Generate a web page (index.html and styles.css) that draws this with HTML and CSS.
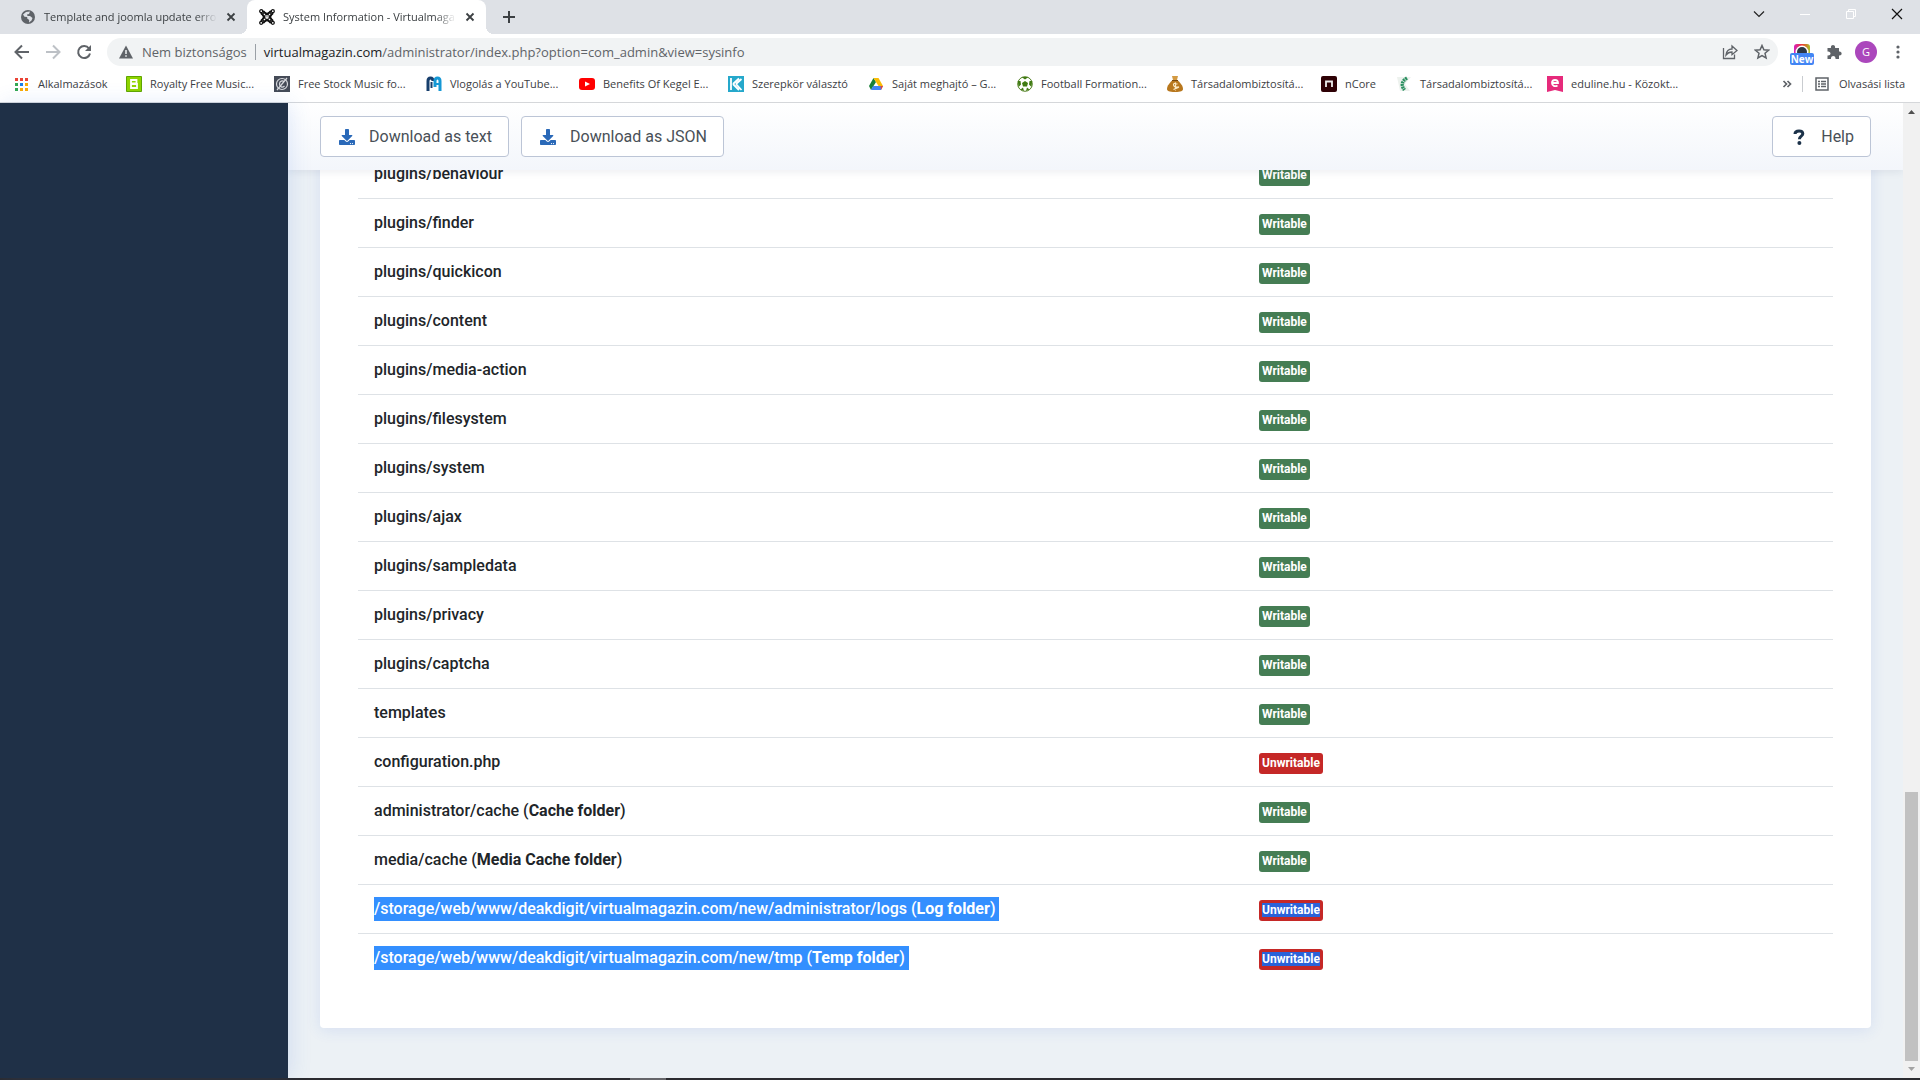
FILE: index.html
```html
<!DOCTYPE html>
<html lang="hu">
<head>
    <meta charset="UTF-8">
    <meta name="viewport" content="width=device-width, initial-scale=1.0">
    <title>System Information - Virtualmagazin</title>
    <link rel="stylesheet" href="styles.css">
</head>
<body>
    <svg width="0" height="0" class="defs">
        <symbol id="close" viewBox="0 0 12 12"><path d="M2.5 2.5l7 7M9.5 2.5l-7 7" stroke="#3c4043" stroke-width="1.8"/></symbol>
        <symbol id="download" viewBox="0 0 512 512"><path fill="#2a69b8" d="M216 0h80c13.300 0 24 10.700 24 24v168h87.700c17.800 0 26.700 21.500 14.100 34.100L269.700 378.300c-7.500 7.500-19.800 7.500-27.300 0L90.100 226.100c-12.600-12.600-3.700-34.100 14.100-34.100H192V24c0-13.300 10.700-24 24-24zm296 376v112c0 13.300-10.700 24-24 24H24c-13.300 0-24-10.700-24-24V376c0-13.300 10.700-24 24-24h146.700l49 49c20.100 20.100 52.500 20.100 72.600 0l49-49H488c13.300 0 24 10.700 24 24zm-124 88c0-11-9-20-20-20s-20 9-20 20 9 20 20 20 20-9 20-20zm64 0c0-11-9-20-20-20s-20 9-20 20 9 20 20 20 20-9 20-20z"/></symbol>
    </svg>

    <header class="browser">
        <div class="tabs">
            <div class="tab">
                <svg class="icon" viewBox="0 0 16 16"><circle cx="8" cy="8" r="7" fill="#5f6368"/><path d="M3 5.500L6 3l4-.5-1 2.500-2 .5.500 1.500H10l2.500 2-1 2.500-2.500 2 .2-2.500-2-1.500V8L4.500 7.800z" fill="#dee1e6"/></svg>
                <span class="tab-title">Template and joomla update erro</span>
                <button class="tab-close" aria-label="Bezárás"><svg width="12" height="12"><use href="#close"/></svg></button>
            </div>
            <div class="tab active">
                <svg class="icon" viewBox="0 0 16 16" fill="none" stroke="#111"><path d="M3 3l10 10M13 3L3 13" stroke-width="5"/><path d="M3 3l10 10M13 3L3 13" stroke="#fff" stroke-width="1.600" stroke-dasharray="1.500 1"/><path d="M4 2.500q4 4 8 0M4 13.500q4-4 8 0M2.500 4q4 4 0 8M13.500 4q-4 4 0 8" stroke-width="1.400"/><g fill="#fff" stroke-width="1.300"><circle cx="2.200" cy="2.200" r="1.500"/><circle cx="13.800" cy="2.200" r="1.500"/><circle cx="2.200" cy="13.800" r="1.500"/><circle cx="13.800" cy="13.800" r="1.500"/></g></svg>
                <span class="tab-title">System Information - Virtualmaga</span>
                <button class="tab-close" aria-label="Bezárás"><svg width="12" height="12"><use href="#close"/></svg></button>
            </div>
            <button class="new-tab" aria-label="Új lap"><svg width="12" height="12"><path d="M6 0v12M0 6h12" stroke="#3c4043" stroke-width="2"/></svg></button>
            <div class="window-controls">
                <button aria-label="Lapok keresése"><svg width="12" height="12"><path d="M1 3.500l5 5 5-5" fill="none" stroke="#222" stroke-width="1.200"/></svg></button>
                <button aria-label="Kis méret"><svg width="12" height="12"><path d="M1 6.500h10" stroke="#fff"/></svg></button>
                <button aria-label="Előző méret"><svg width="12" height="12"><path d="M1.500 3.500h7v7h-7zM3.500 3.500v-2h7v7h-2" fill="none" stroke="#fff"/></svg></button>
                <button aria-label="Ablak bezárása"><svg width="12" height="12"><path d="M1 1l10 10M11 1L1 11" stroke="#111" stroke-width="1.200"/></svg></button>
            </div>
        </div>

        <div class="navbar">
            <button aria-label="Vissza"><svg width="16" height="16" fill="none" stroke="#5f6368" stroke-width="2"><path d="M15 8H2M8 1.500L1.500 8 8 14.500"/></svg></button>
            <button aria-label="Előre"><svg width="16" height="16" fill="none" stroke="#bdc1c6" stroke-width="2"><path d="M1 8h13M8 1.500L14.500 8 8 14.500"/></svg></button>
            <button aria-label="Újratöltés"><svg width="16" height="16"><path d="M13 4.500A6 6 0 1 0 14 9.500" fill="none" stroke="#5f6368" stroke-width="2"/><path d="M15 1v6H9z" fill="#5f6368"/></svg></button>
            <div class="address">
                <svg width="16" height="16"><path d="M8 1.500L15 14.500H1z" fill="#5f6368"/><path d="M8 6v4M8 11.200v1.600" stroke="#f1f3f4" stroke-width="1.500"/></svg>
                <span class="security">Nem biztonságos</span>
                <span class="url"><b>virtualmagazin.com</b>/administrator/index.php?option=com_admin&amp;view=sysinfo</span>
                <button aria-label="Megosztás"><svg width="16" height="16" fill="none" stroke="#5f6368" stroke-width="1.300"><path d="M1.500 4v10.500h11v-4M4 11c.5-4 3-6 6-6V2l5 4.500-5 4.200V8c-3 0-4.500 1-6 3z"/></svg></button>
                <button aria-label="Könyvjelző"><svg width="16" height="16"><path d="M8 1.500l1.900 4.300 4.700.4-3.600 3.100 1.100 4.600L8 11.500l-4.100 2.400L5 9.300 1.400 6.200l4.700-.4z" fill="none" stroke="#5f6368" stroke-width="1.500"/></svg></button>
            </div>
            <div class="extensions">
                <button class="ext-new" aria-label="Bővítmény">
                    <svg width="18" height="18"><defs><linearGradient id="g"><stop stop-color="#d41fc0"/><stop offset=".5" stop-color="#f03a2e"/><stop offset="1" stop-color="#a7c32a"/></linearGradient></defs><rect x="1" y="1" width="16" height="16" rx="3" fill="url(#g)"/><circle cx="9" cy="9" r="6.500" fill="#fff"/><circle cx="9" cy="9" r="5" fill="#2d3846"/></svg>
                    <span class="badge-new">New</span>
                </button>
                <button aria-label="Bővítmények"><svg width="16" height="16"><path d="M1.500 4H5C4 0 10 0 9 4h4v3.500c3.500-.5 3.500 4.500 0 4V15H9.500c.5-4-5-4-4.500 0H1.500v-3.500c4 .5 4-4.500 0-4z" fill="#5f6368"/></svg></button>
                <button class="avatar">G</button>
                <button aria-label="Menü"><svg width="16" height="16" fill="#5f6368"><circle cx="8" cy="3" r="1.600"/><circle cx="8" cy="8" r="1.600"/><circle cx="8" cy="13" r="1.600"/></svg></button>
            </div>
        </div>

        <nav class="bookmarks">
            <a href="#"><svg class="icon" viewBox="0 0 16 16"><path d="M1 2h3v3H1zM6 2h3v3H6zM11 2h3v3h-3z" fill="#ea4335"/><path d="M1 7h3v3H1zM1 12h3v3H1z" fill="#34a853"/><path d="M6 7h3v3H6z" fill="#1a80e8"/><path d="M11 7h3v3h-3zM6 12h3v3H6zM11 12h3v3h-3z" fill="#fbab04"/></svg>Alkalmazások</a>
            <a href="#"><svg class="icon" viewBox="0 0 16 16"><path d="M.5.5h15v15H.5z" fill="#8fd400" stroke="#5fa500"/><path d="M5 4h5.500v3.500H5zM5 8h6v4H5z" fill="none" stroke="#fff" stroke-width="1.800"/></svg>Royalty Free Music...</a>
            <a href="#"><svg class="icon" viewBox="0 0 16 16"><path d="M0 0h16v16H0z" fill="#454b57"/><g fill="none" stroke="#d8dade" stroke-width="1.200"><circle cx="8" cy="8" r="5.500"/><path d="M10.500 6c-2-2-5-1-5 2s3 4 5 2M3 14L13 2"/></g></svg>Free Stock Music fo...</a>
            <a href="#"><svg class="icon" viewBox="0 0 16 16" fill="none" stroke-width="3"><path d="M2 15V5q0-3 2.500-3T7 5" stroke="#173e6c"/><path d="M5.500 12V6" stroke="#173e6c" stroke-width="2"/><path d="M9 11V5q0-3 2.500-3T14 5v10" stroke="#1598d5"/><path d="M10 8h4" stroke="#1598d5" stroke-width="2"/></svg>Vlogolás a YouTube...</a>
            <a href="#"><svg class="icon" viewBox="0 0 16 16"><rect y="2" width="16" height="12" rx="3" fill="#f00"/><path d="M6 5.500L11 8l-5 2.500z" fill="#fff"/></svg>Benefits Of Kegel E...</a>
            <a href="#"><svg class="icon" viewBox="0 0 16 16"><path d="M0 0h16v16H0z" fill="#25a8cb"/><path d="M3 2v12M5 8l6-5.500M5 8l6 6M8 8l5.500-5M8 8l5.500 6" stroke="#fff" stroke-width="1.800"/></svg>Szerepkör választó</a>
            <a href="#"><svg class="icon" viewBox="0 0 16 16"><path d="M5.500 2L1 10l2 4 5-8z" fill="#188038"/><path d="M5.500 2h5L15 10h-4.500z" fill="#fbbc04"/><path d="M5 10h10l-2 4H3z" fill="#4285f4"/><path d="M12.500 10H15l-2 4z" fill="#ea4335"/></svg>Saját meghajtó – G...</a>
            <a href="#"><svg class="icon" viewBox="0 0 16 16"><circle cx="8" cy="8" r="7.300" fill="#fff" stroke="#548224"/><path d="M8 5l3 2-1 3.500H6L5 7zM4.500 1h7L8 3.500zM.8 5L3.500 5l.5 3.500L1.500 11zM15.200 5L12.500 5 12 8.500l2.500 2.500zM3.500 13.500l2.500-2 1 3.500zM12.500 13.500l-2.500-2L9 15z" fill="#407b13"/></svg>Football Formation...</a>
            <a href="#"><svg class="icon" viewBox="0 0 16 16"><path d="M5 0h6l-1 4H6z" fill="#d39a42"/><path d="M6 4h4c3 2 6 6 6 9 0 2-2 3-8 3s-8-1-8-3c0-3 3-7 6-9z" fill="#b8771d"/><path d="M5 4.500h6" stroke="#77470d"/><path d="M10.500 8Q6 6.500 6.500 9t4 2-4 2.500M8.500 6.500v8" fill="none" stroke="#fbe9c5" stroke-width="1.200"/></svg>Társadalombiztosítá...</a>
            <a href="#"><svg class="icon" viewBox="0 0 16 16"><rect width="16" height="16" rx="2" fill="#2e0105"/><path d="M5 11V5.500h6V11" fill="none" stroke="#eee" stroke-width="1.800"/></svg>nCore</a>
            <a href="#"><svg class="icon" viewBox="0 0 16 16"><path d="M1 1h14L9 8l5 7H4z" fill="#edf2ee"/><path d="M11 2Q3 7 8.500 14" fill="none" stroke="#2b8f60" stroke-width="3.500" stroke-dasharray="2 .6"/></svg>Társadalombiztosítá...</a>
            <a href="#"><svg class="icon" viewBox="0 0 16 16"><path d="M0 0h16v16l-8-2-8 2z" fill="#e62a7b"/><path d="M5 7h6c0-4-6-4-6 0 0 3 3 4 5.500 2.500" fill="none" stroke="#fff" stroke-width="1.800"/></svg>eduline.hu - Közokt...</a>
            <div class="bookmarks-end">
                <button aria-label="További könyvjelzők"><svg width="10" height="10"><path d="M1.500 2l3 3-3 3M5.500 2l3 3-3 3" fill="none" stroke="#5f6368" stroke-width="1.700"/></svg></button>
                <a href="#" class="reading"><svg class="icon" viewBox="0 0 16 16"><path d="M2 2h12v12H2z" fill="none" stroke="#5f6368" stroke-width="1.500"/><path d="M4 5.500h2M7 5.500h5M4 8h2M7 8h5M4 10.500h2M7 10.500h5" stroke="#5f6368" stroke-width="1.400"/></svg>Olvasási lista</a>
            </div>
        </nav>
    </header>

    <div class="page">
        <aside class="sidebar"></aside>
        <main class="content">
            <div class="toolbar">
                <button class="btn"><svg width="16" height="16"><use href="#download"/></svg>Download as text</button>
                <button class="btn"><svg width="16" height="16"><use href="#download"/></svg>Download as JSON</button>
                <button class="btn btn-help"><svg width="16" height="16"><path d="M4 5q0-3 4-3 3.800 0 3.800 2.800C11.800 7.300 8.400 7 8.400 10.200" fill="none" stroke="#1c3249" stroke-width="3"/><circle cx="8.400" cy="14" r="2" fill="#1c3249"/></svg>Help</button>
            </div>
            <div class="card">
                <table>
                    <tbody>
                        <tr><th scope="row">plugins/behaviour</th><td><span class="badge">Writable</span></td></tr>
                        <tr><th scope="row">plugins/finder</th><td><span class="badge">Writable</span></td></tr>
                        <tr><th scope="row">plugins/quickicon</th><td><span class="badge">Writable</span></td></tr>
                        <tr><th scope="row">plugins/content</th><td><span class="badge">Writable</span></td></tr>
                        <tr><th scope="row">plugins/media-action</th><td><span class="badge">Writable</span></td></tr>
                        <tr><th scope="row">plugins/filesystem</th><td><span class="badge">Writable</span></td></tr>
                        <tr><th scope="row">plugins/system</th><td><span class="badge">Writable</span></td></tr>
                        <tr><th scope="row">plugins/ajax</th><td><span class="badge">Writable</span></td></tr>
                        <tr><th scope="row">plugins/sampledata</th><td><span class="badge">Writable</span></td></tr>
                        <tr><th scope="row">plugins/privacy</th><td><span class="badge">Writable</span></td></tr>
                        <tr><th scope="row">plugins/captcha</th><td><span class="badge">Writable</span></td></tr>
                        <tr><th scope="row">templates</th><td><span class="badge">Writable</span></td></tr>
                        <tr><th scope="row">configuration.php</th><td><span class="badge danger">Unwritable</span></td></tr>
                        <tr><th scope="row">administrator/cache (<strong>Cache folder</strong>)</th><td><span class="badge">Writable</span></td></tr>
                        <tr><th scope="row">media/cache (<strong>Media Cache folder</strong>)</th><td><span class="badge">Writable</span></td></tr>
                        <tr><th scope="row"><span class="selected">/storage/web/www/deakdigit/virtualmagazin.com/new/administrator/logs (<strong>Log folder</strong>) </span></th><td><span class="badge danger"><span class="selected">Unwritable</span></span></td></tr>
                        <tr><th scope="row"><span class="selected">/storage/web/www/deakdigit/virtualmagazin.com/new/tmp (<strong>Temp folder</strong>) </span></th><td><span class="badge danger"><span class="selected">Unwritable</span></span></td></tr>
                    </tbody>
                </table>
            </div>
        </main>
        <div class="scrollbar">
            <svg width="17" height="17"><path d="M5 11l3.500-4 3.500 4z" fill="#505050"/></svg>
            <div class="thumb"></div>
            <svg width="17" height="17"><path d="M5 6l3.500 4L12 6z" fill="#a3a3a3"/></svg>
        </div>
    </div>
    <div class="taskbar"></div>
</body>
</html>
```
FILE: styles.css
```css
* {
    box-sizing: border-box;
}
body {
    margin: 0;
    height: 100vh;
    display: flex;
    flex-direction: column;
    overflow: hidden;
    font-family: Roboto, sans-serif;
    font-size: 16px;
    line-height: 24px;
    color: #212529;
}
button {
    font: inherit;
    color: inherit;
    background: none;
    border: none;
    padding: 0;
}
svg {
    display: block;
    flex: none;
}
.defs {
    position: absolute;
}
.icon {
    width: 16px;
    height: 16px;
}

/* browser */
.browser {
    font-family: "Open Sans", sans-serif;
    font-size: 11px;
    line-height: 16px;
    color: #3c4043;
    border-bottom: 1px solid #d5d7da;
}
.tabs {
    display: flex;
    height: 34px;
    padding-left: 8px;
    background: #dee1e6;
}
.tab {
    display: flex;
    align-items: center;
    gap: 8px;
    width: 239px;
    padding: 0 10px 0 12px;
}
.tab.active {
    position: relative;
    background: #fff;
    border-radius: 8px 8px 0 0;
}
.tab.active::before,
.tab.active::after {
    content: "";
    position: absolute;
    bottom: 0;
    width: 8px;
    height: 8px;
}
.tab.active::before {
    left: -8px;
    background: radial-gradient(circle at 0 0, #dee1e6 8px, #fff 8px);
}
.tab.active::after {
    right: -8px;
    background: radial-gradient(circle at 100% 0, #dee1e6 8px, #fff 8px);
}
.tab-title {
    flex: 1;
    white-space: nowrap;
    -webkit-mask-image: linear-gradient(to right, #000 88%, transparent);
}
.new-tab {
    margin-left: 17px;
}
.window-controls {
    display: flex;
    gap: 34px;
    margin-left: auto;
    padding: 0 17px 6px 0;
}
.navbar {
    display: flex;
    align-items: center;
    height: 36px;
    padding: 0 14px;
    gap: 15px;
}
.address {
    flex: 1;
    display: flex;
    align-items: center;
    gap: 8px;
    height: 28px;
    padding: 0 8px 0 11px;
    border-radius: 14px;
    background: #f1f3f4;
    font-size: 13px;
    color: #5f6368;
}
.security {
    padding-right: 8px;
    border-right: 1px solid #9aa0a6;
}
.url {
    flex: 1;
}
.url b {
    font-weight: 400;
    color: #202124;
}
.address button + button {
    margin-left: 8px;
}
.extensions {
    display: flex;
    align-items: center;
    gap: 13px;
}
.ext-new {
    position: relative;
    margin-right: 2px;
}
.badge-new {
    position: absolute;
    top: 10px;
    left: -3px;
    width: 24px;
    border-radius: 2px;
    background: #4285f4;
    color: #fff;
    font-size: 10px;
    font-weight: 700;
    line-height: 12px;
}
.avatar {
    width: 22px;
    height: 22px;
    border-radius: 50%;
    background: #ab47bc;
    color: #fff;
}
.bookmarks {
    display: grid;
    grid-template-columns: 112px 148px 152px 153px 149px 140px 149px 150px 154px 75px 151px 150px 1fr;
    align-items: center;
    height: 32px;
    padding: 0 15px 4px 14px;
}
.bookmarks a {
    display: flex;
    align-items: center;
    gap: 8px;
    color: #3c4043;
    text-decoration: none;
    white-space: nowrap;
}
.bookmarks-end {
    display: flex;
    align-items: center;
    justify-content: flex-end;
    gap: 10px;
}
.bookmarks .reading {
    gap: 9px;
    padding-left: 11px;
    border-left: 1px solid #c9ccd0;
}

/* administrator */
.page {
    flex: 1;
    display: flex;
    min-height: 0;
    background: #ecf1f5;
}
.sidebar {
    position: relative;
    z-index: 3;
    width: 288px;
    background: #1f3047;
    box-shadow: 3px 0 20px rgba(60, 110, 220, .14);
}
.content {
    flex: 1;
    overflow: hidden;
}
.toolbar {
    position: relative;
    z-index: 2;
    display: flex;
    gap: 12px;
    padding: 13px 32px;
    background: linear-gradient(#fff, #f3f6fb);
    box-shadow: 0 2px 8px rgba(20, 40, 80, .08);
}
.btn {
    display: flex;
    align-items: center;
    gap: 14px;
    height: 41px;
    padding: 0 16px 0 18px;
    border: 1px solid #bcc5d6;
    border-radius: 4px;
    background: #fff;
    color: #495057;
}
.btn-help {
    margin-left: auto;
}
.card {
    margin: -20px 32px 0;
    padding: 0 38px 45px;
    border-radius: 4px;
    background: #fff;
    box-shadow: 0 2px 15px rgba(50, 100, 220, .12);
}
table {
    width: 100%;
    border-collapse: separate;
    border-spacing: 0;
    table-layout: fixed;
}
th,
td {
    height: 49px;
    padding: 12px 16px;
    border-bottom: 1px solid #dee2e6;
    text-align: left;
    font-weight: 400;
}
th {
    width: 60%;
    font-weight: 500;
    white-space: nowrap;
}
tr:last-child th,
tr:last-child td {
    border-bottom-color: transparent;
}
strong {
    font-weight: 700;
}
.selected {
    display: inline-block;
    background: #338fff;
    color: #fff;
    white-space: pre;
}
.badge {
    display: inline-block;
    padding: 3px 3px 4px;
    border-radius: 3px;
    background: #457d54;
    color: #fff;
    font-size: 12px;
    font-weight: 700;
    line-height: 14px;
    vertical-align: baseline;
}
.badge.danger {
    background: #c52827;
}
.badge .selected {
    background: #2a62d9;
}
.scrollbar {
    display: flex;
    flex-direction: column;
    width: 17px;
    background: #f1f1f1;
}
.thumb {
    width: 13px;
    height: 269px;
    margin: auto 2px 0;
    background: #c1c1c1;
}
.taskbar {
    height: 2px;
    background: linear-gradient(to right, #2b2b2f 630px, #66666a 630px, #66666a 666px, #2b2b2f 666px);
}
```
